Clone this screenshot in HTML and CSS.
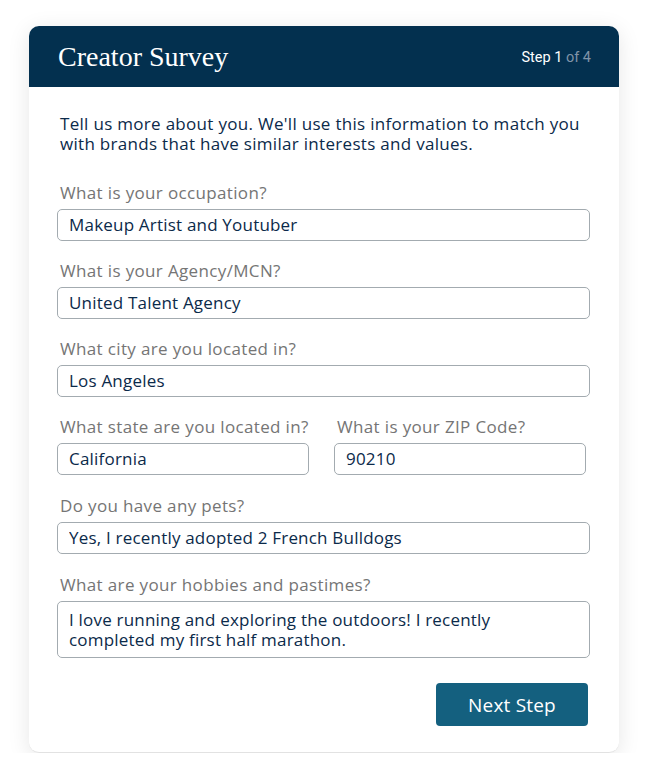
FILE: index.html
```html
<!DOCTYPE html>
<html lang="en">
<head>
  <meta charset="UTF-8">
  <meta name="viewport" content="width=device-width, initial-scale=1.0">
  <title>Creator Survey</title>
  <link rel="stylesheet" href="styles.css">
</head>
<body>

  <div class="survey-card">
    <div class="survey-header">
      <h1>Creator Survey</h1>
      <span class="step">Step 1 <span class="step-total">of 4</span></span>
    </div>

    <form class="survey-body">
      <p class="intro">Tell us more about you. We'll use this information to match you with brands that have similar interests and values.</p>

      <div class="field">
        <label for="occupation">What is your occupation?</label>
        <input id="occupation" type="text" value="Makeup Artist and Youtuber">
      </div>

      <div class="field">
        <label for="agency">What is your Agency/MCN?</label>
        <input id="agency" type="text" value="United Talent Agency">
      </div>

      <div class="field">
        <label for="city">What city are you located in?</label>
        <input id="city" type="text" value="Los Angeles">
      </div>

      <div class="field-row">
        <div class="field">
          <label for="state">What state are you located in?</label>
          <input id="state" type="text" value="California">
        </div>
        <div class="field">
          <label for="zip">What is your ZIP Code?</label>
          <input id="zip" type="text" value="90210">
        </div>
      </div>

      <div class="field">
        <label for="pets">Do you have any pets?</label>
        <input id="pets" type="text" value="Yes, I recently adopted 2 French Bulldogs">
      </div>

      <div class="field">
        <label for="hobbies">What are your hobbies and pastimes?</label>
        <textarea id="hobbies">I love running and exploring the outdoors! I recently completed my first half marathon.</textarea>
      </div>

      <div class="actions">
        <button type="submit" class="next-btn">Next Step</button>
      </div>
    </form>
  </div>

</body>
</html>
```

FILE: styles.css
```css
body {
  font-family: "Open Sans", Arial, sans-serif;
  margin: 0;
  padding: 26px 0 0;
  background-color: #ffffff;
}
.survey-card {
  width: 590px;
  margin: 0 auto;
  background-color: white;
  border-radius: 10px;
  overflow: hidden;
  border-bottom: 1px solid #e2e2e2;
  box-shadow: 0px 4px 22px rgba(0, 0, 0, 0.1);
}
.survey-header {
  background-color: #03304f;
  height: 61px;
  padding: 0 28px 0 29px;
  display: flex;
  align-items: center;
  justify-content: space-between;
}
.survey-header h1 {
  margin: 0;
  color: white;
  font-family: "Liberation Serif", serif;
  font-weight: normal;
  font-size: 28px;
  padding-top: 1px;
}
.step {
  color: white;
  font-size: 14.5px;
  font-family: Roboto, sans-serif;
  padding-top: 2px;
}
.step-total {
  color: #8094a8;
}
.survey-body {
  padding: 27px 29px 26px 28px;
}
.intro {
  margin: 0 0 29px 3px;
  color: #0b2a4a;
  font-size: 17px;
  letter-spacing: 0.3px;
  line-height: 20px;
}
.field {
  display: flex;
  flex-direction: column;
  margin-bottom: 20px;
}
.field label {
  color: #757575;
  font-size: 17px;
  letter-spacing: 0.35px;
  line-height: 20px;
  white-space: nowrap;
  margin: 0 0 6px 3px;
}
.field input,
.field textarea {
  height: 32px;
  box-sizing: border-box;
  border: 1px solid #a3abb0;
  border-radius: 5px;
  padding: 0 11px 2px;
  font-family: "Open Sans", Arial, sans-serif;
  font-size: 17px;
  font-weight: 500;
  letter-spacing: 0.2px;
  color: #0b2a4a;
  background: white;
}
.field textarea {
  height: 57px;
  padding: 8px 11px 0;
  line-height: 20px;
  resize: none;
  overflow: hidden;
}
.field-row {
  display: flex;
  gap: 25px;
  margin-bottom: 21px;
}
.field-row .field {
  width: 252px;
  margin-bottom: 0;
}
.field-row + .field {
  margin-bottom: 21px;
}
.actions {
  display: flex;
  justify-content: flex-end;
  padding: 5px 2px 0 0;
}
.next-btn {
  width: 152px;
  height: 43px;
  background-color: #14607f;
  color: white;
  border: none;
  border-radius: 4px;
  font-family: "Open Sans", Arial, sans-serif;
  font-size: 19px;
  letter-spacing: 0.2px;
  cursor: pointer;
}
```
